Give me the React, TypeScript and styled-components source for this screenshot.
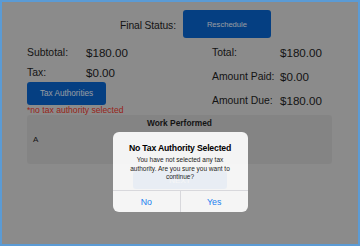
import React, { FC } from 'react';
import styled, { createGlobalStyle } from 'styled-components';

const GlobalStyle = createGlobalStyle`
	html, body {
		margin: 0;
		padding: 0;
	}
	body {
		font-family: 'Liberation Sans', Arial, Helvetica, sans-serif;
		color: #1e1e1e;
	}
`;

const Screen = styled.div`
	position: relative;
	width: 360px;
	height: 246px;
	box-sizing: border-box;
	border: 2px solid #5b9bd5;
	background: #d6d6d6;
	overflow: hidden;
`;

const Header = styled.div`
	display: flex;
	align-items: center;
	padding: 8px 0 0 118px;
`;

const HeaderLabel = styled.span`
	font-size: 10.3px;
	letter-spacing: -0.1px;
	padding-top: 2px;
`;

const BlueButton = styled.button<{ $w: number; $h: number; $fs: number }>`
	width: ${(p) => p.$w}px;
	height: ${(p) => p.$h}px;
	border: none;
	border-radius: 3px;
	background: #0862c8;
	color: #e4ecf8;
	font-family: inherit;
	font-size: ${(p) => p.$fs}px;
	padding: 0;
`;

const Summary = styled.div`
	display: grid;
	grid-template-columns: 185px 1fr;
	padding: 3px 0 0 25px;
`;

const Column = styled.div<{ $top: number }>`
	display: flex;
	flex-direction: column;
	align-items: flex-start;
	padding-top: ${(p) => p.$top}px;
`;

const Line = styled.div<{ $h: number; $label: number }>`
	display: grid;
	grid-template-columns: ${(p) => p.$label}px auto;
	height: ${(p) => p.$h}px;
	line-height: ${(p) => p.$h}px;
`;

const Label = styled.span`
	font-size: 10.4px;
`;

const Value = styled.span`
	font-size: 11.6px;
`;

const Note = styled.div`
	font-size: 8.6px;
	line-height: 11px;
	color: #e8362a;
`;

const Panel = styled.div`
	margin: -1px 26px 0 25px;
	height: 49px;
	box-sizing: border-box;
	border-radius: 3px;
	background: #cbcbcb;
	padding-top: 3px;
`;

const PanelTitle = styled.div`
	text-align: center;
	font-weight: bold;
	font-size: 8.4px;
	line-height: 11px;
`;

const PanelText = styled.div`
	margin-top: 6px;
	padding-left: 6px;
	font-size: 8px;
	line-height: 10px;
`;

const NextRow = styled.div`
	display: flex;
	justify-content: center;
	margin-top: 7px;
`;

const Overlay = styled.div`
	position: absolute;
	inset: 0;
	background: rgba(0, 0, 0, 0.35);
	display: flex;
	justify-content: center;
	align-items: flex-start;
	padding-top: 130px;
`;

const Dialog = styled.div`
	width: 135px;
	height: 80px;
	display: flex;
	flex-direction: column;
	border-radius: 6px;
	background: rgba(255, 255, 255, 0.91);
	text-align: center;
	overflow: hidden;
`;

const DialogBody = styled.div`
	flex: 1;
	padding-top: 10px;
`;

const DialogTitle = styled.div`
	font-weight: bold;
	font-size: 8.7px;
	letter-spacing: -0.2px;
	line-height: 12px;
	color: #000;
`;

const DialogMessage = styled.div`
	margin-top: 2px;
	font-size: 6.5px;
	line-height: 8.5px;
	color: #222;
`;

const DialogActions = styled.div`
	display: grid;
	grid-template-columns: 1fr 1fr;
	height: 22px;
	border-top: 1px solid #d8d8dc;
	box-sizing: border-box;
`;

const ActionButton = styled.button<{ $divider?: boolean }>`
	border: none;
	background: transparent;
	padding: 0;
	font-family: inherit;
	font-size: 8.8px;
	color: #1a7ff0;
	border-left: ${(p) => (p.$divider ? '1px solid #d8d8dc' : 'none')};
`;

const App: FC = () => (
	<Screen>
		<GlobalStyle />
		<Header>
			<HeaderLabel>Final Status:</HeaderLabel>
			<BlueButton $w={88} $h={28} $fs={7.6} style={{ marginLeft: 7 }}>
				Reschedule
			</BlueButton>
		</Header>

		<Summary>
			<Column $top={2}>
				<Line $h={20} $label={59}>
					<Label>Subtotal:</Label>
					<Value>$180.00</Value>
				</Line>
				<Line $h={19} $label={59}>
					<Label>Tax:</Label>
					<Value>$0.00</Value>
				</Line>
				<BlueButton $w={79} $h={23} $fs={8.2}>
					Tax Authorities
				</BlueButton>
				<Note>*no tax authority selected</Note>
			</Column>
			<Column $top={0}>
				<Line $h={24} $label={68}>
					<Label>Total:</Label>
					<Value>$180.00</Value>
				</Line>
				<Line $h={24} $label={68}>
					<Label>Amount Paid:</Label>
					<Value>$0.00</Value>
				</Line>
				<Line $h={24} $label={68}>
					<Label>Amount Due:</Label>
					<Value>$180.00</Value>
				</Line>
			</Column>
		</Summary>

		<Panel>
			<PanelTitle>Work Performed</PanelTitle>
			<PanelText>A</PanelText>
		</Panel>

		<NextRow>
			<BlueButton $w={94} $h={18} $fs={8}>NEXT</BlueButton>
		</NextRow>

		<Overlay>
			<Dialog>
				<DialogBody>
					<DialogTitle>No Tax Authority Selected</DialogTitle>
					<DialogMessage>
						You have not selected any tax
						<br />
						authority. Are you sure you want to
						<br />
						continue?
					</DialogMessage>
				</DialogBody>
				<DialogActions>
					<ActionButton>No</ActionButton>
					<ActionButton $divider>Yes</ActionButton>
				</DialogActions>
			</Dialog>
		</Overlay>
	</Screen>
);

export default App;
